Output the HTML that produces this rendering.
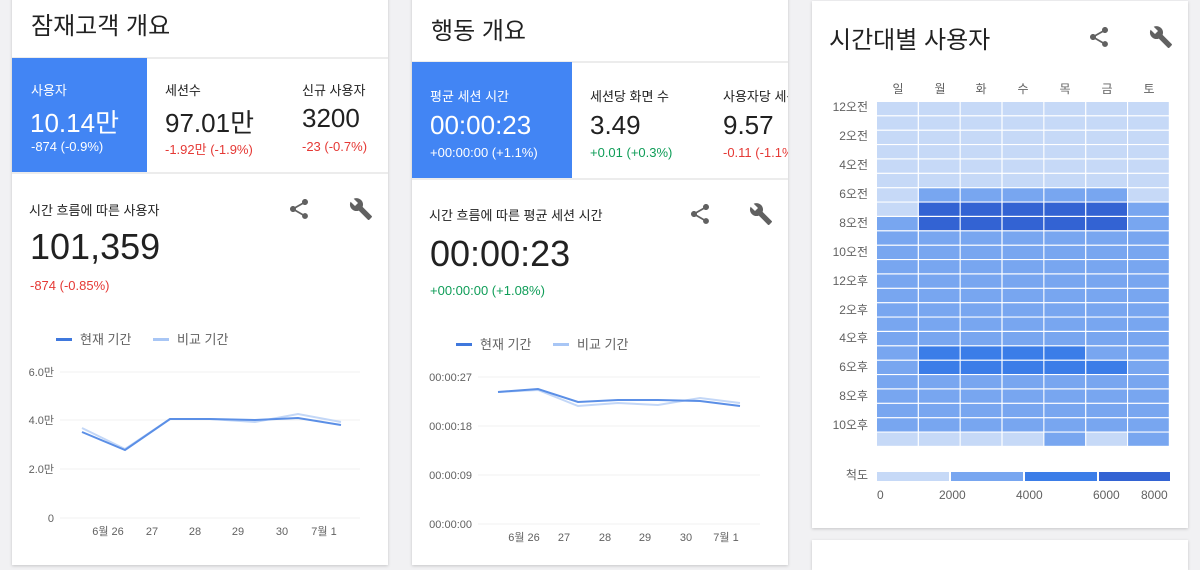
<!DOCTYPE html>
<html><head><meta charset="utf-8"><style>
*{margin:0;padding:0;box-sizing:border-box}
body{width:1200px;height:553px;background:#f1f1f3;font-family:"Liberation Sans","Noto Sans CJK KR",sans-serif;color:#212121;position:relative;overflow:hidden}
.card{position:absolute;background:#fff;box-shadow:0 1px 3px rgba(0,0,0,.18)}
.a{position:absolute;white-space:nowrap}
.hr{position:absolute;height:2px;background:#ececec}
.blue{position:absolute;background:#4285f4}
.red{color:#e53935}.green{color:#0f9d58}
.lbl{font-size:13px}.val{font-size:26px}.dl{font-size:13px}
</style></head><body>

<div class="card" style="left:12px;top:-5px;width:376px;height:570px"></div>
<div class="a" style="left:31px;top:6px;font-size:24px">잠재고객 개요</div>
<div class="hr" style="left:12px;top:57px;width:376px"></div>
<div class="blue" style="left:12px;top:58px;width:135px;height:114px"></div>
<div class="a lbl" style="left:31px;top:80px;color:#fff">사용자</div>
<div class="a val" style="left:30px;top:103px;color:#fff">10.14만</div>
<div class="a dl" style="left:31px;top:139px;color:#fff">-874 (-0.9%)</div>
<div class="a lbl" style="left:165px;top:80px">세션수</div>
<div class="a val" style="left:165px;top:103px">97.01만</div>
<div class="a dl red" style="left:165px;top:139px">-1.92만 (-1.9%)</div>
<div class="a lbl" style="left:302px;top:80px">신규 사용자</div>
<div class="a val" style="left:302px;top:103px">3200</div>
<div class="a dl red" style="left:302px;top:139px">-23 (-0.7%)</div>
<div class="hr" style="left:12px;top:172px;width:376px"></div>
<div class="a" style="left:29px;top:200px;font-size:13px">시간 흐름에 따른 사용자</div>
<div class="a" style="left:30px;top:226px;font-size:36px">101,359</div>
<div class="a red" style="left:30px;top:278px;font-size:13px">-874 (-0.85%)</div>

<div class="card" style="left:412px;top:-5px;width:376px;height:570px"></div>
<div class="a" style="left:431px;top:11px;font-size:24px">행동 개요</div>
<div class="hr" style="left:412px;top:61px;width:376px"></div>
<div class="blue" style="left:412px;top:62px;width:160px;height:116px"></div>
<div class="a lbl" style="left:430px;top:86px;color:#fff">평균 세션 시간</div>
<div class="a val" style="left:430px;top:110px;color:#fff">00:00:23</div>
<div class="a dl" style="left:430px;top:145px;color:#fff">+00:00:00 (+1.1%)</div>
<div class="a lbl" style="left:590px;top:86px">세션당 화면 수</div>
<div class="a val" style="left:590px;top:110px">3.49</div>
<div class="a dl green" style="left:590px;top:145px">+0.01 (+0.3%)</div>
<div style="position:absolute;left:723px;top:80px;width:65px;height:90px;overflow:hidden">
<div class="a lbl" style="left:0;top:6px">사용자당 세션</div>
<div class="a val" style="left:0;top:30px">9.57</div>
<div class="a dl red" style="left:0;top:65px">-0.11 (-1.1%)</div></div>
<div class="hr" style="left:412px;top:178px;width:376px"></div>
<div class="a" style="left:429px;top:205px;font-size:13px">시간 흐름에 따른 평균 세션 시간</div>
<div class="a" style="left:430px;top:233px;font-size:36px">00:00:23</div>
<div class="a green" style="left:430px;top:283px;font-size:13px">+00:00:00 (+1.08%)</div>

<div class="card" style="left:812px;top:1px;width:376px;height:527px"></div>
<div class="card" style="left:812px;top:540px;width:376px;height:30px"></div>
<div class="a" style="left:829px;top:20px;font-size:24px">시간대별 사용자</div>

<svg width="1200" height="553" style="position:absolute;left:0;top:0" font-family="Liberation Sans, Noto Sans CJK KR, sans-serif">
<defs>
<path id="share" transform="translate(-12,-12)" d="M18 16.08c-.76 0-1.44.3-1.96.77L8.91 12.7c.05-.23.09-.46.09-.7s-.04-.47-.09-.7l7.05-4.11c.54.5 1.25.81 2.04.81 1.66 0 3-1.34 3-3s-1.34-3-3-3-3 1.34-3 3c0 .24.04.47.09.7L8.04 9.81C7.5 9.31 6.79 9 6 9c-1.66 0-3 1.34-3 3s1.34 3 3 3c.79 0 1.5-.31 2.04-.81l7.12 4.16c-.05.21-.08.43-.08.65 0 1.61 1.31 2.92 2.92 2.92s2.92-1.31 2.92-2.92-1.31-2.92-2.92-2.92z"/>
<path id="wr" transform="translate(-12,-12)" d="M22.7 19l-9.1-9.1c.9-2.3.4-5-1.5-6.9-2-2-5-2.4-7.4-1.3L9 6 6 9 1.6 4.7C.4 7.1.9 10.1 2.9 12.1c1.9 1.9 4.6 2.4 6.9 1.5l9.1 9.1c.4.4 1 .4 1.4 0l2.3-2.3c.5-.4.5-1.1.1-1.4z"/>
</defs>
<g fill="#616161">
<use href="#share" x="299" y="209"/><use href="#wr" x="361" y="209"/>
<use href="#share" x="700" y="214"/><use href="#wr" x="761" y="214"/>
<use href="#share" x="1099" y="37"/><use href="#wr" x="1161" y="37"/>
</g>
<rect x="56" y="338" width="16" height="3" fill="#3f78dd"/><text x="80" y="344" font-size="13" fill="#616161">현재 기간</text>
<rect x="153" y="338" width="16" height="3" fill="#a8c6f5"/><text x="177" y="344" font-size="13" fill="#616161">비교 기간</text>
<g stroke="#f0f0f0" stroke-width="1"><line x1="60" y1="372" x2="360" y2="372"/><line x1="60" y1="420" x2="360" y2="420"/><line x1="60" y1="469" x2="360" y2="469"/><line x1="60" y1="518" x2="360" y2="518"/></g>
<g font-size="11" fill="#616161" text-anchor="end"><text x="54" y="376">6.0만</text><text x="54" y="424">4.0만</text><text x="54" y="473">2.0만</text><text x="54" y="522">0</text></g>
<g font-size="11" fill="#616161" text-anchor="middle"><text x="108" y="535">6월 26</text><text x="152" y="535">27</text><text x="195" y="535">28</text><text x="238" y="535">29</text><text x="282" y="535">30</text><text x="324" y="535">7월 1</text></g>
<polyline fill="none" stroke="#c3d7f7" stroke-width="2" points="82,428 125,449 170,419 210,419 255,422 298,414 341,422"/>
<polyline fill="none" stroke="#5b8fe6" stroke-width="2" points="82,432 125,450 170,419 210,419 255,420 298,418 341,425"/>
<rect x="456" y="343" width="16" height="3" fill="#3f78dd"/><text x="480" y="349" font-size="13" fill="#616161">현재 기간</text>
<rect x="553" y="343" width="16" height="3" fill="#a8c6f5"/><text x="577" y="349" font-size="13" fill="#616161">비교 기간</text>
<g stroke="#f0f0f0" stroke-width="1"><line x1="478" y1="377" x2="760" y2="377"/><line x1="478" y1="426" x2="760" y2="426"/><line x1="478" y1="475" x2="760" y2="475"/><line x1="478" y1="524" x2="760" y2="524"/></g>
<g font-size="11" fill="#616161" text-anchor="end"><text x="472" y="381">00:00:27</text><text x="472" y="430">00:00:18</text><text x="472" y="479">00:00:09</text><text x="472" y="528">00:00:00</text></g>
<g font-size="11" fill="#616161" text-anchor="middle"><text x="524" y="541">6월 26</text><text x="564" y="541">27</text><text x="605" y="541">28</text><text x="645" y="541">29</text><text x="686" y="541">30</text><text x="726" y="541">7월 1</text></g>
<polyline fill="none" stroke="#c3d7f7" stroke-width="2" points="498,392 538,390 578,406 618,403 658,405 700,398 740,403"/>
<polyline fill="none" stroke="#5b8fe6" stroke-width="2" points="498,392 538,389 578,402 618,400 658,400 700,401 740,406"/>
<g font-size="12" fill="#616161" text-anchor="middle">
<text x="898" y="93">일</text><text x="940" y="93">월</text><text x="981" y="93">화</text><text x="1023" y="93">수</text><text x="1065" y="93">목</text><text x="1107" y="93">금</text><text x="1149" y="93">토</text></g>
<g font-size="12" fill="#616161" text-anchor="end">
<text x="868" y="111">12오전</text><text x="868" y="140">2오전</text><text x="868" y="169">4오전</text><text x="868" y="198">6오전</text><text x="868" y="227">8오전</text><text x="868" y="256">10오전</text><text x="868" y="285">12오후</text><text x="868" y="314">2오후</text><text x="868" y="342">4오후</text><text x="868" y="371">6오후</text><text x="868" y="400">8오후</text><text x="868" y="429">10오후</text></g>
<g id="hm"></g>
<text x="868" y="479" font-size="12" fill="#616161" text-anchor="end">척도</text>
<rect x="877" y="472" width="72" height="9" fill="#c6d9f7"/><rect x="951" y="472" width="72" height="9" fill="#78a6f0"/><rect x="1025" y="472" width="72" height="9" fill="#3b7de8"/><rect x="1099" y="472" width="71" height="9" fill="#3363d3"/>
<g font-size="12" fill="#616161"><text x="877" y="499">0</text><text x="939" y="499">2000</text><text x="1016" y="499">4000</text><text x="1093" y="499">6000</text><text x="1141" y="499">8000</text></g>
</svg>
<script>
var L='#c6d9f7',M='#78a6f0',D='#3363d3',B='#3b7de8';
var rows=[];
for(var h=0;h<24;h++){var r=[M,M,M,M,M,M,M];
if(h<6)r=[L,L,L,L,L,L,L];
if(h==6)r=[L,M,M,M,M,M,L];
if(h==7)r=[L,D,D,D,D,D,M];
if(h==8)r=[M,D,D,D,D,D,M];
if(h==17)r=[M,B,B,B,B,M,M];
if(h==18)r=[M,B,B,B,B,B,M];
if(h==23)r=[L,L,L,L,M,L,M];
rows.push(r);}
var g=document.getElementById('hm'),s='';
var cw=293/7,rh=345/24;
for(var h=0;h<24;h++)for(var c=0;c<7;c++){
s+='<rect x="'+(877+c*cw).toFixed(1)+'" y="'+(102+h*rh).toFixed(1)+'" width="'+(cw-1.2).toFixed(1)+'" height="'+(rh-1.2).toFixed(1)+'" fill="'+rows[h][c]+'"/>';}
g.innerHTML=s;
</script>
</body></html>
